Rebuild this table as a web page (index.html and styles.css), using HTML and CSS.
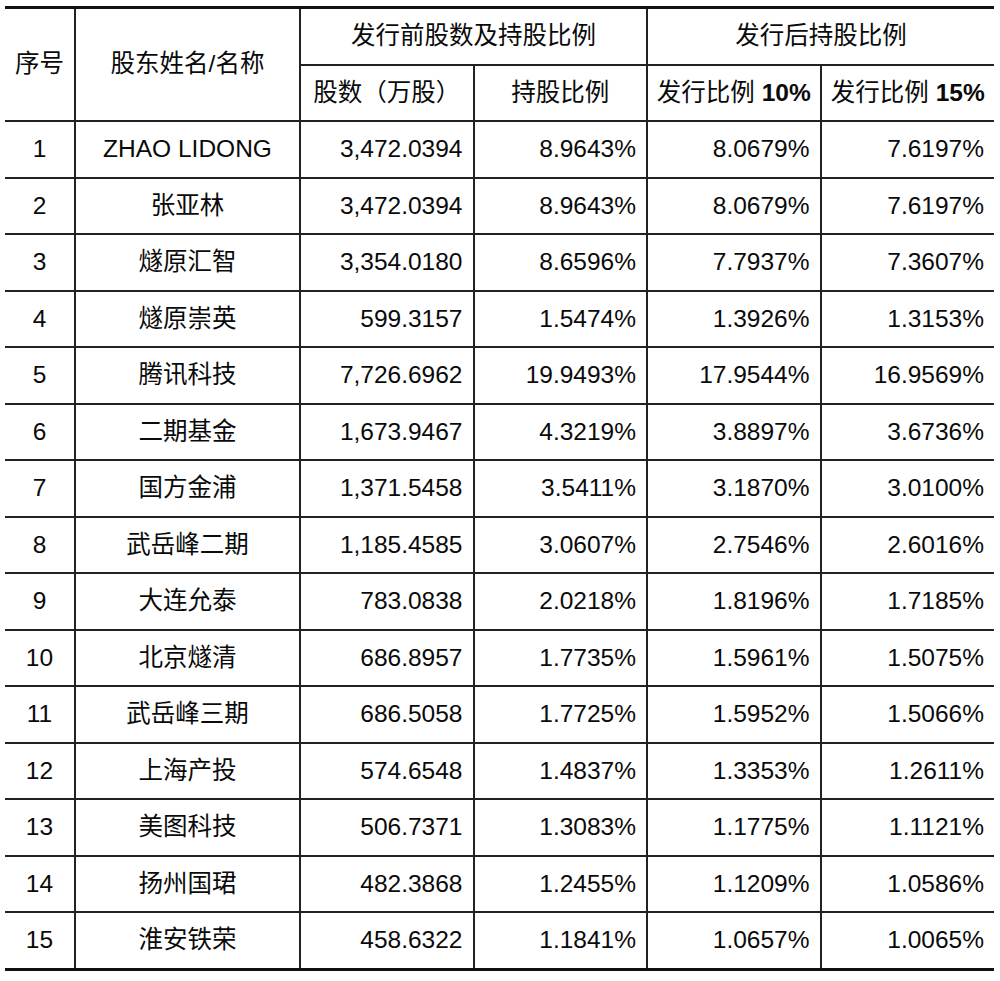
FILE: index.html
```html
<!DOCTYPE html>
<html lang="zh-CN">
<head>
<meta charset="utf-8">
<title>股东持股比例</title>
<link rel="stylesheet" href="styles.css">
</head>
<body>
<table class="holders">
  <colgroup>
    <col class="c-no"><col class="c-name"><col class="c-num"><col class="c-num"><col class="c-num"><col class="c-num">
  </colgroup>
  <thead>
    <tr class="h1">
      <th rowspan="2">序号</th>
      <th rowspan="2">股东姓名/名称</th>
      <th colspan="2">发行前股数及持股比例</th>
      <th colspan="2">发行后持股比例</th>
    </tr>
    <tr class="h2">
      <th>股数（万股）</th>
      <th>持股比例</th>
      <th>发行比例 <b>10%</b></th>
      <th>发行比例 <b>15%</b></th>
    </tr>
  </thead>
  <tbody>
    <tr><td class="ctr">1</td><td class="ctr">ZHAO LIDONG</td><td>3,472.0394</td><td>8.9643%</td><td>8.0679%</td><td>7.6197%</td></tr>
    <tr><td class="ctr">2</td><td class="ctr">张亚林</td><td>3,472.0394</td><td>8.9643%</td><td>8.0679%</td><td>7.6197%</td></tr>
    <tr><td class="ctr">3</td><td class="ctr">燧原汇智</td><td>3,354.0180</td><td>8.6596%</td><td>7.7937%</td><td>7.3607%</td></tr>
    <tr><td class="ctr">4</td><td class="ctr">燧原崇英</td><td>599.3157</td><td>1.5474%</td><td>1.3926%</td><td>1.3153%</td></tr>
    <tr><td class="ctr">5</td><td class="ctr">腾讯科技</td><td>7,726.6962</td><td>19.9493%</td><td>17.9544%</td><td>16.9569%</td></tr>
    <tr><td class="ctr">6</td><td class="ctr">二期基金</td><td>1,673.9467</td><td>4.3219%</td><td>3.8897%</td><td>3.6736%</td></tr>
    <tr><td class="ctr">7</td><td class="ctr">国方金浦</td><td>1,371.5458</td><td>3.5411%</td><td>3.1870%</td><td>3.0100%</td></tr>
    <tr><td class="ctr">8</td><td class="ctr">武岳峰二期</td><td>1,185.4585</td><td>3.0607%</td><td>2.7546%</td><td>2.6016%</td></tr>
    <tr><td class="ctr">9</td><td class="ctr">大连允泰</td><td>783.0838</td><td>2.0218%</td><td>1.8196%</td><td>1.7185%</td></tr>
    <tr><td class="ctr">10</td><td class="ctr">北京燧清</td><td>686.8957</td><td>1.7735%</td><td>1.5961%</td><td>1.5075%</td></tr>
    <tr><td class="ctr">11</td><td class="ctr">武岳峰三期</td><td>686.5058</td><td>1.7725%</td><td>1.5952%</td><td>1.5066%</td></tr>
    <tr><td class="ctr">12</td><td class="ctr">上海产投</td><td>574.6548</td><td>1.4837%</td><td>1.3353%</td><td>1.2611%</td></tr>
    <tr><td class="ctr">13</td><td class="ctr">美图科技</td><td>506.7371</td><td>1.3083%</td><td>1.1775%</td><td>1.1121%</td></tr>
    <tr><td class="ctr">14</td><td class="ctr">扬州国珺</td><td>482.3868</td><td>1.2455%</td><td>1.1209%</td><td>1.0586%</td></tr>
    <tr><td class="ctr">15</td><td class="ctr">淮安铁荣</td><td>458.6322</td><td>1.1841%</td><td>1.0657%</td><td>1.0065%</td></tr>
  </tbody>
</table>
</body>
</html>
```
FILE: styles.css
```css
html, body {
  margin: 0;
  padding: 0;
  background: #ffffff;
}

body {
  padding: 6px 0 0 5px;
  font-family: "Liberation Sans", "Noto Sans CJK SC", Arial, sans-serif;
  color: #0a0a0a;
}

.holders {
  border-collapse: collapse;
  width: 989px;
  table-layout: fixed;
  font-size: 24.5px;
  line-height: 1;
}

.c-no { width: 70px; }
.c-name { width: 225px; }
.c-num { width: 173.5px; }

.holders th,
.holders td {
  border: 2px solid #222222;
  padding: 0 10px;
  height: 54.5px;
  vertical-align: middle;
  white-space: nowrap;
}

.holders th {
  font-weight: normal;
  text-align: center;
  padding: 0;
}

.holders th b {
  font-weight: bold;
}

.holders td {
  text-align: right;
}

.holders td.ctr {
  text-align: center;
  padding: 0;
}

.holders tr > :first-child {
  border-left: none;
}

.holders tr > :last-child {
  border-right: none;
}

.holders .h1 th {
  border-top: 3px solid #111111;
}

.holders .h2 th:first-child {
  border-left: 2px solid #222222;
}

.holders tbody tr:last-child td {
  border-bottom: 3px solid #111111;
}
```
